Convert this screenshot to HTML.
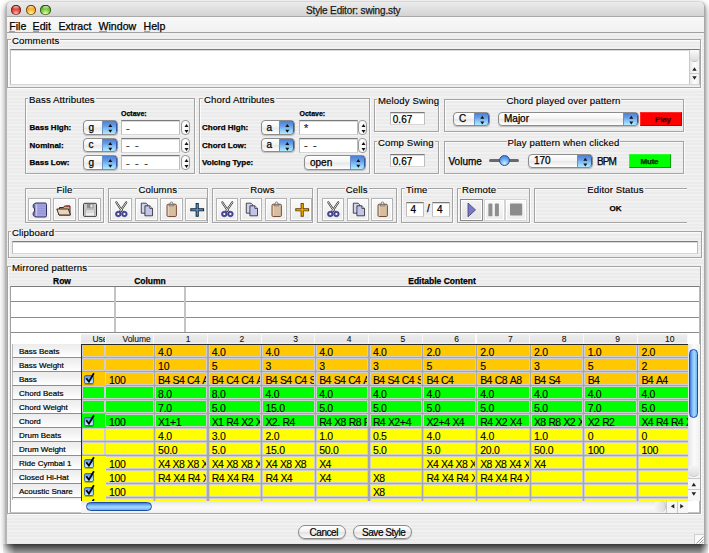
<!DOCTYPE html>
<html><head><meta charset="utf-8"><style>
*{box-sizing:border-box;margin:0;padding:0}
html,body{width:709px;height:553px;overflow:hidden;background:#fff;font-family:"Liberation Sans",sans-serif;color:#000}
.a{position:absolute}
#shadow{position:absolute;left:3px;top:544px;width:705px;height:9px;
  background:linear-gradient(to bottom,rgba(0,0,0,.62) 0,rgba(0,0,0,.5) 4px,rgba(0,0,0,.38) 9px);
  -webkit-mask-image:linear-gradient(to right,rgba(0,0,0,.15),#000 12px,#000 calc(100% - 8px),rgba(0,0,0,.2))}
#win{position:absolute;left:6px;top:2px;width:699px;height:542px;border-radius:5px 5px 0 0;overflow:hidden;
  background:repeating-linear-gradient(to bottom,#ebebeb 0,#ebebeb 1.75px,#f1f1f1 1.75px,#f1f1f1 3.5px) fixed;border-left:1px solid #b4b4b4;border-right:1px solid #a8a8a8;
  box-shadow:0 3px 6px 1px rgba(0,0,0,.42),0 0 2px rgba(0,0,0,.25)}
#title{position:absolute;left:0;top:0;width:698px;height:15px;background:linear-gradient(to bottom,#ececec,#d3d3d3);border-bottom:1px solid #a9a9a9}
#menu{position:absolute;left:0;top:15px;width:698px;height:16px;background:linear-gradient(to bottom,#f8f8f8,#f1f1f1);border-bottom:1px solid #a0a0a0}
.t{position:absolute;white-space:nowrap;line-height:1}
body{-webkit-text-stroke:0.25px currentColor}
.grp{position:absolute;border:1px solid #a4a4a4;box-shadow:inset 1px 1px 0 #fbfbfb,1px 1px 0 #fbfbfb}
.gt{position:absolute;font-size:9.6px;line-height:10px;white-space:nowrap;letter-spacing:0.12px;-webkit-text-stroke:0.12px #000}
.gt span{background:repeating-linear-gradient(to bottom,#ebebeb 0,#ebebeb 1.75px,#f1f1f1 1.75px,#f1f1f1 3.5px) fixed;padding:0 1px}
.tf{position:absolute;background:#fff;border:1px solid #bdbdbd;border-top:1px solid #7a7a7a;border-bottom-color:#d6d6d6;box-shadow:inset 0 1px 0 #dcdcdc}
.light{position:absolute;border-radius:50%}
.cb{position:absolute;border-radius:4px;border:1px solid #8c8c8c;background:linear-gradient(to bottom,#ffffff 0%,#f4f4f4 45%,#e8e8e8 55%,#ffffff 100%);box-shadow:0 1px 1px rgba(0,0,0,.2);overflow:hidden}
.cbt{position:absolute;line-height:1;white-space:nowrap}
.cbb{position:absolute;right:0;top:-1px;width:15px;bottom:-1px;border-radius:0 4px 4px 0;background:linear-gradient(to bottom,#4a80d6 0%,#6a9ee6 40%,#7cb8f2 55%,#b0ecff 100%);border:1px solid #3458a8;border-left:1px solid #6a90c8;border-bottom-color:#6a9ad0}
.cbb svg{position:absolute;left:0;top:0}
.sp{position:absolute;border-radius:4px;border:1px solid #9a9a9a;background:linear-gradient(to right,#f4f4f4,#fff 40%,#f0f0f0)}
.ib{position:absolute;border:1px solid #b4b4b4;background:linear-gradient(to bottom,#fafafa,#ececec);box-shadow:inset 0 0 0 1px #fff}
.ib.lt{border-color:#d4d4d4}
.ib.pr{border-color:#8a8a8a;background:linear-gradient(to bottom,#f2f2f2,#e4e4e4)}
.ib svg{position:absolute;left:0;top:0}

.mh{position:absolute;font-size:8.5px;font-weight:bold;line-height:8px;white-space:nowrap;text-align:center}
.rh{position:absolute;left:11.5px;width:69.5px;height:14px;border-left:1px solid #b8b8b8;border-bottom:1px solid #8e8e8e;
 background:linear-gradient(to bottom,#ececec 0,#f2f2f2 40%,#fbfbfb 80%,#ffffff 100%)}
.rh span{position:absolute;left:6.5px;top:3.3px;font-size:8px;line-height:8px;white-space:nowrap;color:#000;-webkit-text-stroke:0.2px #000;letter-spacing:0px}
.hd{position:absolute;top:333px;height:11px;background:linear-gradient(to bottom,#ffffff 0,#ececec 20%,#e4e4e4 80%,#f6f6f6 100%);border-right:1px solid #fafafa;overflow:hidden}
.hd span{position:absolute;top:1.8px;font-size:8.5px;line-height:8px;white-space:nowrap;color:#111;-webkit-text-stroke:0.1px #111}
.ce{position:absolute;overflow:hidden;font-size:10.5px;line-height:10px;white-space:nowrap;-webkit-text-stroke:0.1px #000;letter-spacing:-0.3px;word-spacing:0px}
.ce.g{box-shadow:0 0 0 0.7px #e2e2e4}
.ce span{position:absolute;left:2.3px;top:1.5px}
.ce i{font-style:normal;letter-spacing:-0.7px}
.chk{position:absolute;width:10px;height:9px;border-radius:2px;border:1px solid #4a6aa0;background:linear-gradient(to bottom,#5a8ee6 0,#94c4f8 50%,#c8f2ff 100%);box-shadow:0 1px 1px rgba(0,0,0,.3)}

.pb{position:absolute;border-radius:8px;border:1px solid #8a8a8a;background:linear-gradient(to bottom,#ffffff 0%,#f0f0f0 50%,#e2e2e2 51%,#fafafa 100%);box-shadow:0 1px 1px rgba(0,0,0,.25)}
.pb span{position:absolute;top:2px;font-size:10px;line-height:10px;white-space:nowrap;letter-spacing:-0.45px;-webkit-text-stroke:0.2px #000}
</style></head><body>
<div id="shadow"></div>
<div id="win"><div id="title"></div><div id="menu"></div></div>
<div class="light" style="left:10.7px;top:4.6px;width:10.6px;height:10.6px;background:radial-gradient(circle at 50% 85%,#ffb8b0 0,#e85a50 35%,#c02a20 70%,#801410 100%);box-shadow:inset 0 0 0 0.8px rgba(50,20,20,.7)"></div>
<div class="light" style="left:13px;top:5.6px;width:6px;height:3.2px;background:linear-gradient(to bottom,rgba(255,255,255,.75),rgba(255,255,255,.1))"></div>
<div class="light" style="left:25.7px;top:4.6px;width:10.6px;height:10.6px;background:radial-gradient(circle at 50% 85%,#fff8a0 0,#f8c040 35%,#e08a10 70%,#8a5000 100%);box-shadow:inset 0 0 0 0.8px rgba(50,20,20,.7)"></div>
<div class="light" style="left:28px;top:5.6px;width:6px;height:3.2px;background:linear-gradient(to bottom,rgba(255,255,255,.75),rgba(255,255,255,.1))"></div>
<div class="light" style="left:40.2px;top:4.6px;width:10.6px;height:10.6px;background:radial-gradient(circle at 50% 85%,#e0ffb0 0,#8ad850 35%,#48a820 70%,#1e5a08 100%);box-shadow:inset 0 0 0 0.8px rgba(50,20,20,.7)"></div>
<div class="light" style="left:42.5px;top:5.6px;width:6px;height:3.2px;background:linear-gradient(to bottom,rgba(255,255,255,.75),rgba(255,255,255,.1))"></div>
<div class="t" style="left:306px;top:5.5px;font-size:10px;color:#1a1a1a;letter-spacing:-0.15px">Style Editor: swing.sty</div>
<div class="t" style="left:9.3px;top:21.3px;font-size:10.6px;color:#000;">File</div>
<div class="a" style="left:9px;top:31px;width:6px;height:1px;background:#a0a0a0"></div>
<div class="t" style="left:32.6px;top:21.3px;font-size:10.6px;color:#000;">Edit</div>
<div class="a" style="left:33px;top:31px;width:6px;height:1px;background:#a0a0a0"></div>
<div class="t" style="left:58.5px;top:21.3px;font-size:10.6px;color:#000;">Extract</div>
<div class="t" style="left:98.5px;top:21.3px;font-size:10.6px;color:#000;">Window</div>
<div class="a" style="left:99px;top:31px;width:8px;height:1px;background:#a0a0a0"></div>
<div class="t" style="left:143.5px;top:21.3px;font-size:10.6px;color:#000;">Help</div>
<div class="a" style="left:144px;top:31px;width:6px;height:1px;background:#a0a0a0"></div>
<div class="grp" style="left:7px;top:39px;width:694px;height:49px;"></div>
<div class="gt" style="left:11px;top:36.4px"><span>Comments</span></div>
<div class="tf" style="left:9.5px;top:48.5px;width:690px;height:36.5px"></div>
<div class="a" style="left:688.5px;top:49.5px;width:10.5px;height:34.5px;border-left:1px solid #c8c8c8;background:linear-gradient(to right,#e8e8e8,#fdfdfd 50%,#f0f0f0)"></div>
<div class="a" style="left:689.5px;top:50px;width:9.5px;height:12px;border-radius:0 0 5px 5px;background:linear-gradient(to bottom,#fafafa,#dcdcdc);border-bottom:1px solid #c0c0c0"></div>
<div class="a" style="left:689px;top:72.5px;width:10px;height:1px;background:#c8c8c8"></div>
<svg class="a" style="left:688.5px;top:62px" width="11" height="22"><path d="M3.3 8.7L5.5 5.2L7.7 8.7Z M3.3 14.3L5.5 17.8L7.7 14.3Z" fill="#222"/></svg>
<div class="grp" style="left:25px;top:98px;width:170px;height:76px;"></div>
<div class="gt" style="left:28px;top:95.4px"><span>Bass Attributes</span></div>
<div class="t" style="left:121px;top:110px;font-size:7px;font-weight:bold;color:#000;">Octave:</div>
<div class="t" style="left:29.5px;top:124px;font-size:8px;font-weight:bold;color:#000;">Bass High:</div>
<div class="cb" style="left:82.5px;top:120px;width:35.0px;height:14.5px"><div class="cbt" style="left:5px;top:1.75px;font-size:10px">g</div><div class="cbb"><svg width="15" height="14.5" viewBox="0 0 15 14.5"><path d="M5.3 6.05L7.3 3.05L9.3 6.05Z M5.3 8.65L7.3 11.65L9.3 8.65Z" fill="#111"/></svg></div></div>
<div class="tf" style="left:121px;top:120px;width:59px;height:15px"><div class="t" style="left:4px;top:1.5px;font-size:10px"><span style="word-spacing:2.4px;color:#444;font-size:11px">-</span></div></div>
<div class="sp" style="left:181px;top:120px;width:9px;height:15px"><svg class="a" style="left:0;top:0" width="9" height="15"><path d="M2.5 6.0L4.5 3.0L6.5 6.0Z M2.5 9.0L4.5 12.0L6.5 9.0Z" fill="#111"/></svg></div>
<div class="t" style="left:29.5px;top:141.5px;font-size:8px;font-weight:bold;color:#000;">Nominal:</div>
<div class="cb" style="left:82.5px;top:137.5px;width:35.0px;height:14.5px"><div class="cbt" style="left:5px;top:1.75px;font-size:10px">c</div><div class="cbb"><svg width="15" height="14.5" viewBox="0 0 15 14.5"><path d="M5.3 6.05L7.3 3.05L9.3 6.05Z M5.3 8.65L7.3 11.65L9.3 8.65Z" fill="#111"/></svg></div></div>
<div class="tf" style="left:121px;top:137.5px;width:59px;height:15.0px"><div class="t" style="left:4px;top:1.5px;font-size:10px"><span style="word-spacing:2.4px;color:#444;font-size:11px">- -</span></div></div>
<div class="sp" style="left:181px;top:137.5px;width:9px;height:15.0px"><svg class="a" style="left:0;top:0" width="9" height="15.0"><path d="M2.5 6.0L4.5 3.0L6.5 6.0Z M2.5 9.0L4.5 12.0L6.5 9.0Z" fill="#111"/></svg></div>
<div class="t" style="left:29.5px;top:159px;font-size:8px;font-weight:bold;color:#000;">Bass Low:</div>
<div class="cb" style="left:82.5px;top:155px;width:35.0px;height:14.5px"><div class="cbt" style="left:5px;top:1.75px;font-size:10px">g</div><div class="cbb"><svg width="15" height="14.5" viewBox="0 0 15 14.5"><path d="M5.3 6.05L7.3 3.05L9.3 6.05Z M5.3 8.65L7.3 11.65L9.3 8.65Z" fill="#111"/></svg></div></div>
<div class="tf" style="left:121px;top:155px;width:59px;height:15px"><div class="t" style="left:4px;top:1.5px;font-size:10px"><span style="word-spacing:2.4px;color:#444;font-size:11px">- - -</span></div></div>
<div class="sp" style="left:181px;top:155px;width:9px;height:15px"><svg class="a" style="left:0;top:0" width="9" height="15"><path d="M2.5 6.0L4.5 3.0L6.5 6.0Z M2.5 9.0L4.5 12.0L6.5 9.0Z" fill="#111"/></svg></div>
<div class="grp" style="left:199px;top:98px;width:170.5px;height:76px;"></div>
<div class="gt" style="left:203px;top:95.4px"><span>Chord Attributes</span></div>
<div class="t" style="left:299.5px;top:110px;font-size:7px;font-weight:bold;color:#000;">Octave:</div>
<div class="t" style="left:202px;top:124px;font-size:8px;font-weight:bold;color:#000;">Chord High:</div>
<div class="cb" style="left:260.5px;top:120px;width:34.5px;height:14.5px"><div class="cbt" style="left:5px;top:1.75px;font-size:10px">a</div><div class="cbb"><svg width="15" height="14.5" viewBox="0 0 15 14.5"><path d="M5.3 6.05L7.3 3.05L9.3 6.05Z M5.3 8.65L7.3 11.65L9.3 8.65Z" fill="#111"/></svg></div></div>
<div class="tf" style="left:299px;top:120px;width:58.5px;height:15px"><div class="t" style="left:4px;top:1.5px;font-size:10px"><span style="word-spacing:2.4px;color:#333;font-size:11px">*</span></div></div>
<div class="sp" style="left:358px;top:120px;width:9px;height:15px"><svg class="a" style="left:0;top:0" width="9" height="15"><path d="M2.5 6.0L4.5 3.0L6.5 6.0Z M2.5 9.0L4.5 12.0L6.5 9.0Z" fill="#111"/></svg></div>
<div class="t" style="left:202px;top:141.5px;font-size:8px;font-weight:bold;color:#000;">Chord Low:</div>
<div class="cb" style="left:260.5px;top:137.5px;width:34.5px;height:14.5px"><div class="cbt" style="left:5px;top:1.75px;font-size:10px">a</div><div class="cbb"><svg width="15" height="14.5" viewBox="0 0 15 14.5"><path d="M5.3 6.05L7.3 3.05L9.3 6.05Z M5.3 8.65L7.3 11.65L9.3 8.65Z" fill="#111"/></svg></div></div>
<div class="tf" style="left:299px;top:137.5px;width:58.5px;height:15.0px"><div class="t" style="left:4px;top:1.5px;font-size:10px"><span style="word-spacing:2.4px;color:#333;font-size:11px">- -</span></div></div>
<div class="sp" style="left:358px;top:137.5px;width:9px;height:15.0px"><svg class="a" style="left:0;top:0" width="9" height="15.0"><path d="M2.5 6.0L4.5 3.0L6.5 6.0Z M2.5 9.0L4.5 12.0L6.5 9.0Z" fill="#111"/></svg></div>
<div class="t" style="left:202px;top:159px;font-size:8px;font-weight:bold;color:#000;">Voicing Type:</div>
<div class="cb" style="left:304px;top:155px;width:62px;height:14.5px"><div class="cbt" style="left:5px;top:1.75px;font-size:10px">open</div><div class="cbb"><svg width="15" height="14.5" viewBox="0 0 15 14.5"><path d="M5.3 6.05L7.3 3.05L9.3 6.05Z M5.3 8.65L7.3 11.65L9.3 8.65Z" fill="#111"/></svg></div></div>
<div class="grp" style="left:374px;top:99px;width:65px;height:32.5px;"></div>
<div class="gt" style="left:377px;top:96.4px"><span>Melody Swing</span></div>
<div class="tf" style="left:390px;top:112px;width:35px;height:13px"><div class="t" style="left:1.8px;top:1.5px;font-size:10px">0.67</div></div>
<div class="grp" style="left:374px;top:141px;width:65px;height:33px;"></div>
<div class="gt" style="left:377px;top:138.4px"><span>Comp Swing</span></div>
<div class="tf" style="left:390px;top:154px;width:35px;height:13px"><div class="t" style="left:1.8px;top:1.5px;font-size:10px">0.67</div></div>
<div class="grp" style="left:443.5px;top:99px;width:240.0px;height:33px;"></div>
<div class="gt" style="left:443.5px;width:240.0px;top:96.4px;text-align:center"><span>Chord played over pattern</span></div>
<div class="cb" style="left:453px;top:111.5px;width:36.5px;height:14.0px"><div class="cbt" style="left:5px;top:1.5px;font-size:10px">C</div><div class="cbb"><svg width="15" height="14.0" viewBox="0 0 15 14.0"><path d="M5.3 5.8L7.3 2.8L9.3 5.8Z M5.3 8.4L7.3 11.4L9.3 8.4Z" fill="#111"/></svg></div></div>
<div class="cb" style="left:498px;top:111.5px;width:141px;height:14.0px"><div class="cbt" style="left:5px;top:1.5px;font-size:10px">Major</div><div class="cbb"><svg width="15" height="14.0" viewBox="0 0 15 14.0"><path d="M5.3 5.8L7.3 2.8L9.3 5.8Z M5.3 8.4L7.3 11.4L9.3 8.4Z" fill="#111"/></svg></div></div>
<div class="a" style="left:640px;top:112px;width:42px;height:14px;background:#ff0000;border:1px solid #c00000;border-top-color:#ff2a2a;border-left-color:#ff2a2a"></div>
<div class="t" style="left:655px;top:115.5px;font-size:8px;font-weight:bold;color:#4a0000;letter-spacing:-0.2px">Play</div>
<div class="grp" style="left:443.5px;top:141px;width:240.0px;height:33px;"></div>
<div class="gt" style="left:443.5px;width:240.0px;top:138.4px;text-align:center"><span>Play pattern when clicked</span></div>
<div class="t" style="left:448.5px;top:157px;font-size:10px;color:#000;">Volume</div>
<div class="a" style="left:489px;top:159px;width:30px;height:3px;border-radius:2px;background:#6a6a6a"></div>
<div class="a" style="left:499px;top:155px;width:11px;height:11px;border-radius:50%;border:1px solid #2a4a9a;background:radial-gradient(circle at 50% 80%,#c8f4ff 0,#6aaaf0 50%,#3a70d0 100%)"></div>
<div class="cb" style="left:527.5px;top:153.5px;width:65.5px;height:14.0px"><div class="cbt" style="left:5.5px;top:1.5px;font-size:10px">170</div><div class="cbb"><svg width="15" height="14.0" viewBox="0 0 15 14.0"><path d="M5.3 5.8L7.3 2.8L9.3 5.8Z M5.3 8.4L7.3 11.4L9.3 8.4Z" fill="#111"/></svg></div></div>
<div class="t" style="left:597px;top:157px;font-size:10px;color:#000;letter-spacing:-0.9px">BPM</div>
<div class="a" style="left:628.5px;top:154px;width:42px;height:14px;background:#00ff00;border:1px solid #00a000;border-top-color:#2aff2a;border-left-color:#2aff2a"></div>
<div class="t" style="left:640.5px;top:157.5px;font-size:8px;font-weight:bold;color:#002a00;letter-spacing:-0.2px">Mute</div>
<div class="grp" style="left:25px;top:188px;width:79px;height:34.5px;"></div>
<div class="gt" style="left:25px;width:79px;top:185.4px;text-align:center"><span>File</span></div>
<div class="ib" style="left:28px;top:198px;width:22.5px;height:22.5px"><svg width="22" height="22" viewBox="0 0 22 22">
<rect x="5.5" y="4" width="12" height="14" rx="1.5" fill="#a2a2e0" stroke="#2e2e5a" stroke-width="1"/>
<path d="M7.5 5.5V16.5" stroke="#c8c8f0" stroke-width="1"/>
<path d="M9 7h7M9 9.5h7M9 12h7M9 14.5h7" stroke="#8a8ad0" stroke-width="0.6"/>
<path d="M5.5 4.6C3.6 4.6 3.6 9.6 5.5 9.6" fill="#a2a2e0" stroke="#2e2e5a" stroke-width="1"/>
<path d="M5.5 12.4C3.6 12.4 3.6 17.4 5.5 17.4" fill="#a2a2e0" stroke="#2e2e5a" stroke-width="1"/>
</svg></div>
<div class="ib" style="left:53px;top:198px;width:22.5px;height:22.5px"><svg width="22" height="22" viewBox="0 0 22 22">
<path d="M5.5 8.5h4l1-1.5h5.5v9h-11z" fill="#c8aa88" stroke="#3a2a1a" stroke-width="1"/>
<path d="M12 7h4" stroke="#c03030" stroke-width="1.2"/>
<path d="M2.8 10h11.5l2.2 6h-11.5z" fill="#ead6bc" stroke="#3a2a1a" stroke-width="1" stroke-linejoin="round"/>
</svg></div>
<div class="ib" style="left:78px;top:198px;width:22.5px;height:22.5px"><svg width="22" height="22" viewBox="0 0 22 22">
<rect x="4.5" y="4.3" width="13" height="13.2" rx="1.2" fill="#c6c6c6" stroke="#3a3a3a" stroke-width="1"/>
<rect x="8" y="4.8" width="6.5" height="4.5" fill="#8e8e8e"/>
<rect x="11.5" y="5.5" width="2" height="3" fill="#e8e8e8"/>
<rect x="6.5" y="11" width="9" height="6" fill="#ececec" stroke="#9a9a9a" stroke-width="0.5"/>
<path d="M7 13h8" stroke="#b0b0b0" stroke-width="0.6"/>
</svg></div>
<div class="grp" style="left:107.5px;top:188px;width:100.5px;height:34.5px;"></div>
<div class="gt" style="left:107.5px;width:100.5px;top:185.4px;text-align:center"><span>Columns</span></div>
<div class="ib" style="left:110px;top:198px;width:22px;height:22.5px"><svg width="22" height="22" viewBox="0 0 22 22">
<path d="M5.3 3.4L11.6 12.6M15.3 3.4L9 12.6" stroke="#2a2a2a" stroke-width="2" stroke-linecap="round"/>
<path d="M5.3 3.4L11.6 12.6M15.3 3.4L9 12.6" stroke="#f0f0f0" stroke-width="0.9" stroke-linecap="round"/>
<circle cx="7.3" cy="15" r="2.8" fill="#4c4ca0" stroke="#2a2a66" stroke-width="0.6"/>
<circle cx="13.4" cy="15" r="2.8" fill="#4c4ca0" stroke="#2a2a66" stroke-width="0.6"/>
<circle cx="7.3" cy="15" r="1.1" fill="#fff"/>
<circle cx="13.4" cy="15" r="1.1" fill="#fff"/>
</svg></div>
<div class="ib" style="left:135px;top:198px;width:22.5px;height:22.5px"><svg width="22" height="22" viewBox="0 0 22 22">
<path d="M5.3 4.2h4.8l1.6 1.6v8.4h-6.4z" fill="#d2d2f2" stroke="#222" stroke-width="0.8"/>
<path d="M8.9 6.8h5l2.6 2.6v7.4h-7.6z" fill="#c4c4ea" stroke="#222" stroke-width="0.8"/>
<path d="M13.9 6.8v2.6h2.6" fill="#eeeeff" stroke="#222" stroke-width="0.8"/>
</svg></div>
<div class="ib" style="left:160px;top:198px;width:22.5px;height:22.5px"><svg width="22" height="22" viewBox="0 0 22 22">
<rect x="6" y="5.2" width="9.4" height="12.3" rx="1.2" fill="#d6bfa0" stroke="#7a4a3a" stroke-width="1"/>
<path d="M8.2 5.4h4.6v1.4h-4.6z" fill="#e8e8e8" stroke="#555" stroke-width="0.7"/>
<circle cx="10.5" cy="4.2" r="1.3" fill="#e0e0e0" stroke="#666" stroke-width="0.7"/>
<rect x="6.9" y="7.2" width="1" height="9.5" fill="#e8d8c0"/>
</svg></div>
<div class="ib" style="left:185px;top:198px;width:22px;height:22.5px"><svg width="22" height="22" viewBox="0 0 22 22">
<path d="M11.2 3.9V17.7M4.3 10.8H18.1" stroke="#0c1c30" stroke-width="3.1"/>
<path d="M11.2 4.8V16.8M5.2 10.8H17.2" stroke="#5a9acc" stroke-width="1.3"/>
</svg></div>
<div class="grp" style="left:212px;top:188px;width:101px;height:34.5px;"></div>
<div class="gt" style="left:212px;width:101px;top:185.4px;text-align:center"><span>Rows</span></div>
<div class="ib" style="left:215.5px;top:198px;width:22.5px;height:22.5px"><svg width="22" height="22" viewBox="0 0 22 22">
<path d="M5.3 3.4L11.6 12.6M15.3 3.4L9 12.6" stroke="#2a2a2a" stroke-width="2" stroke-linecap="round"/>
<path d="M5.3 3.4L11.6 12.6M15.3 3.4L9 12.6" stroke="#f0f0f0" stroke-width="0.9" stroke-linecap="round"/>
<circle cx="7.3" cy="15" r="2.8" fill="#4c4ca0" stroke="#2a2a66" stroke-width="0.6"/>
<circle cx="13.4" cy="15" r="2.8" fill="#4c4ca0" stroke="#2a2a66" stroke-width="0.6"/>
<circle cx="7.3" cy="15" r="1.1" fill="#fff"/>
<circle cx="13.4" cy="15" r="1.1" fill="#fff"/>
</svg></div>
<div class="ib" style="left:240px;top:198px;width:22px;height:22.5px"><svg width="22" height="22" viewBox="0 0 22 22">
<path d="M5.3 4.2h4.8l1.6 1.6v8.4h-6.4z" fill="#d2d2f2" stroke="#222" stroke-width="0.8"/>
<path d="M8.9 6.8h5l2.6 2.6v7.4h-7.6z" fill="#c4c4ea" stroke="#222" stroke-width="0.8"/>
<path d="M13.9 6.8v2.6h2.6" fill="#eeeeff" stroke="#222" stroke-width="0.8"/>
</svg></div>
<div class="ib" style="left:264.5px;top:198px;width:22.0px;height:22.5px"><svg width="22" height="22" viewBox="0 0 22 22">
<rect x="6" y="5.2" width="9.4" height="12.3" rx="1.2" fill="#d6bfa0" stroke="#7a4a3a" stroke-width="1"/>
<path d="M8.2 5.4h4.6v1.4h-4.6z" fill="#e8e8e8" stroke="#555" stroke-width="0.7"/>
<circle cx="10.5" cy="4.2" r="1.3" fill="#e0e0e0" stroke="#666" stroke-width="0.7"/>
<rect x="6.9" y="7.2" width="1" height="9.5" fill="#e8d8c0"/>
</svg></div>
<div class="ib" style="left:289.5px;top:198px;width:22.0px;height:22.5px"><svg width="22" height="22" viewBox="0 0 22 22">
<path d="M11.2 3.9V17.7M4.3 10.8H18.1" stroke="#5a3a00" stroke-width="3.1"/>
<path d="M11.2 4.8V16.8M5.2 10.8H17.2" stroke="#ffb000" stroke-width="1.3"/>
</svg></div>
<div class="grp" style="left:317px;top:188px;width:79.5px;height:34.5px;"></div>
<div class="gt" style="left:317px;width:79.5px;top:185.4px;text-align:center"><span>Cells</span></div>
<div class="ib" style="left:322px;top:198px;width:22px;height:22.5px"><svg width="22" height="22" viewBox="0 0 22 22">
<path d="M5.3 3.4L11.6 12.6M15.3 3.4L9 12.6" stroke="#2a2a2a" stroke-width="2" stroke-linecap="round"/>
<path d="M5.3 3.4L11.6 12.6M15.3 3.4L9 12.6" stroke="#f0f0f0" stroke-width="0.9" stroke-linecap="round"/>
<circle cx="7.3" cy="15" r="2.8" fill="#4c4ca0" stroke="#2a2a66" stroke-width="0.6"/>
<circle cx="13.4" cy="15" r="2.8" fill="#4c4ca0" stroke="#2a2a66" stroke-width="0.6"/>
<circle cx="7.3" cy="15" r="1.1" fill="#fff"/>
<circle cx="13.4" cy="15" r="1.1" fill="#fff"/>
</svg></div>
<div class="ib" style="left:346.5px;top:198px;width:22.0px;height:22.5px"><svg width="22" height="22" viewBox="0 0 22 22">
<path d="M5.3 4.2h4.8l1.6 1.6v8.4h-6.4z" fill="#d2d2f2" stroke="#222" stroke-width="0.8"/>
<path d="M8.9 6.8h5l2.6 2.6v7.4h-7.6z" fill="#c4c4ea" stroke="#222" stroke-width="0.8"/>
<path d="M13.9 6.8v2.6h2.6" fill="#eeeeff" stroke="#222" stroke-width="0.8"/>
</svg></div>
<div class="ib" style="left:371px;top:198px;width:22px;height:22.5px"><svg width="22" height="22" viewBox="0 0 22 22">
<rect x="6" y="5.2" width="9.4" height="12.3" rx="1.2" fill="#d6bfa0" stroke="#7a4a3a" stroke-width="1"/>
<path d="M8.2 5.4h4.6v1.4h-4.6z" fill="#e8e8e8" stroke="#555" stroke-width="0.7"/>
<circle cx="10.5" cy="4.2" r="1.3" fill="#e0e0e0" stroke="#666" stroke-width="0.7"/>
<rect x="6.9" y="7.2" width="1" height="9.5" fill="#e8d8c0"/>
</svg></div>
<div class="grp" style="left:401px;top:188px;width:51.5px;height:34.5px;"></div>
<div class="gt" style="left:405px;top:185.4px"><span>Time</span></div>
<div class="tf" style="left:405.5px;top:201.5px;width:18.0px;height:15.5px"><div class="t" style="left:4px;top:2.75px;font-size:10px">4</div></div>
<div class="t" style="left:427px;top:204px;font-size:10px;color:#000;">/</div>
<div class="tf" style="left:432px;top:201.5px;width:18px;height:15.5px"><div class="t" style="left:4px;top:2.75px;font-size:10px">4</div></div>
<div class="grp" style="left:457px;top:188px;width:72.5px;height:34.5px;"></div>
<div class="gt" style="left:461px;top:185.4px"><span>Remote</span></div>
<div class="ib pr" style="left:460px;top:198.5px;width:22.5px;height:22.0px"><svg width="22" height="22" viewBox="0 0 22 22">
<path d="M7 3L14.5 9.9L7 16.8Z" fill="#7a7ac2" stroke="#3e3e7a" stroke-width="0.8" stroke-linejoin="round"/>
</svg></div>
<div class="ib lt" style="left:483.5px;top:198.5px;width:21.5px;height:22.0px"><svg width="22" height="22" viewBox="0 0 22 22">
<rect x="3.4" y="3.6" width="4" height="12.6" rx="0.8" fill="#8e8e8e"/>
<rect x="9.9" y="3.6" width="4" height="12.6" rx="0.8" fill="#8e8e8e"/>
</svg></div>
<div class="ib lt" style="left:505px;top:198.5px;width:22px;height:22.0px"><svg width="22" height="22" viewBox="0 0 22 22">
<rect x="4" y="3.6" width="12.2" height="12" rx="0.8" fill="#8c8c8c"/>
</svg></div>
<div class="grp" style="left:533.5px;top:188px;width:153.0px;height:34.5px;border-right:none;box-shadow:inset 1px 1px 0 #fbfbfb,0 1px 0 #fbfbfb;"></div>
<div class="gt" style="left:533.5px;width:164px;top:185px;text-align:center"><span>Editor Status</span></div>
<div class="t" style="left:609.5px;top:205px;font-size:8px;font-weight:bold;color:#000;">OK</div>
<div class="grp" style="left:8px;top:231px;width:693.5px;height:26.5px;"></div>
<div class="gt" style="left:11px;top:228.4px"><span>Clipboard</span></div>
<div class="tf" style="left:12px;top:241px;width:686px;height:12.5px"></div>
<div class="grp" style="left:7px;top:266.4px;width:694px;height:248.10000000000002px;"></div>
<div class="gt" style="left:11px;top:263.2px"><span>Mirrored patterns</span></div>
<div class="mh" style="left:10px;width:104px;top:277px">Row</div>
<div class="mh" style="left:115px;width:70px;top:277px">Column</div>
<div class="mh" style="left:185px;width:514px;top:277px">Editable Content</div>
<div class="a" style="left:10px;top:286px;width:690px;height:227px;background:#fff;border:1px solid #a0a0a0;border-top-color:#7a7a7a;border-bottom-color:#c4c4c4;border-right-color:#b8b8b8"></div>
<div class="a" style="left:11px;top:301px;width:688px;height:1.2px;background:#8c8c8c"></div>
<div class="a" style="left:11px;top:316.5px;width:688px;height:1.2px;background:#8c8c8c"></div>
<div class="a" style="left:11px;top:331.5px;width:688px;height:1.2px;background:#8c8c8c"></div>
<div class="a" style="left:114px;top:287px;width:1.8px;height:45px;background:#c4c4c4"></div>
<div class="a" style="left:184px;top:287px;width:1.8px;height:45px;background:#c4c4c4"></div>
<div class="hd" style="left:81px;width:24.5px"><span style="right:-3px">Use</span></div>
<div class="hd" style="left:105.5px;width:48.80000000000001px"><span style="right:2.5px">Volume</span></div>
<div class="hd" style="left:154.3px;width:53.69999999999999px"><span style="left:33.849999999999994px;transform:translateX(-50%)">1</span></div>
<div class="hd" style="left:208.0px;width:53.700000000000045px"><span style="left:33.85000000000002px;transform:translateX(-50%)">2</span></div>
<div class="hd" style="left:261.70000000000005px;width:53.69999999999999px"><span style="left:33.849999999999994px;transform:translateX(-50%)">3</span></div>
<div class="hd" style="left:315.40000000000003px;width:53.69999999999999px"><span style="left:33.849999999999994px;transform:translateX(-50%)">4</span></div>
<div class="hd" style="left:369.1px;width:53.69999999999999px"><span style="left:33.849999999999994px;transform:translateX(-50%)">5</span></div>
<div class="hd" style="left:422.8px;width:53.700000000000045px"><span style="left:33.85000000000002px;transform:translateX(-50%)">6</span></div>
<div class="hd" style="left:476.50000000000006px;width:53.69999999999999px"><span style="left:33.849999999999994px;transform:translateX(-50%)">7</span></div>
<div class="hd" style="left:530.2px;width:53.700000000000045px"><span style="left:33.85000000000002px;transform:translateX(-50%)">8</span></div>
<div class="hd" style="left:583.9000000000001px;width:53.69999999999993px"><span style="left:33.849999999999966px;transform:translateX(-50%)">9</span></div>
<div class="hd" style="left:637.6px;width:50.39999999999998px"><span style="left:32.19999999999999px;transform:translateX(-50%)">10</span></div>
<div class="a" style="left:81px;top:344px;width:607px;height:156.5px;background:#a6a6ac;overflow:hidden" id="body">
<div class="ce g" style="left:1.5px;top:1.3px;width:21px;height:10.5px;background:#ffc800"></div>
<div class="ce g" style="left:25px;top:1.3px;width:46.5px;height:10.5px;background:#ffc800"></div>
<div class="ce g" style="left:74.80000000000001px;top:1.3px;width:50.5px;height:10.5px;background:#ffc800"><span>4.0</span></div>
<div class="ce g" style="left:128.5px;top:1.3px;width:50.5px;height:10.5px;background:#ffc800"><span>4.0</span></div>
<div class="ce g" style="left:182.20000000000005px;top:1.3px;width:50.5px;height:10.5px;background:#ffc800"><span>4.0</span></div>
<div class="ce g" style="left:235.90000000000003px;top:1.3px;width:50.5px;height:10.5px;background:#ffc800"><span>4.0</span></div>
<div class="ce g" style="left:289.6px;top:1.3px;width:50.5px;height:10.5px;background:#ffc800"><span>4.0</span></div>
<div class="ce g" style="left:343.3px;top:1.3px;width:50.5px;height:10.5px;background:#ffc800"><span>2.0</span></div>
<div class="ce g" style="left:397.00000000000006px;top:1.3px;width:50.5px;height:10.5px;background:#ffc800"><span>2.0</span></div>
<div class="ce g" style="left:450.70000000000005px;top:1.3px;width:50.5px;height:10.5px;background:#ffc800"><span>2.0</span></div>
<div class="ce g" style="left:504.4000000000001px;top:1.3px;width:50.5px;height:10.5px;background:#ffc800"><span>1.0</span></div>
<div class="ce g" style="left:558.1px;top:1.3px;width:50.5px;height:10.5px;background:#ffc800"><span>2.0</span></div>
<div class="rh" style="left:-69.5px;top:0px"><span>Bass Beats</span></div>
<div class="ce g" style="left:1.5px;top:15.3px;width:21px;height:10.5px;background:#ffc800"></div>
<div class="ce g" style="left:25px;top:15.3px;width:46.5px;height:10.5px;background:#ffc800"></div>
<div class="ce g" style="left:74.80000000000001px;top:15.3px;width:50.5px;height:10.5px;background:#ffc800"><span>10</span></div>
<div class="ce g" style="left:128.5px;top:15.3px;width:50.5px;height:10.5px;background:#ffc800"><span>5</span></div>
<div class="ce g" style="left:182.20000000000005px;top:15.3px;width:50.5px;height:10.5px;background:#ffc800"><span>3</span></div>
<div class="ce g" style="left:235.90000000000003px;top:15.3px;width:50.5px;height:10.5px;background:#ffc800"><span>3</span></div>
<div class="ce g" style="left:289.6px;top:15.3px;width:50.5px;height:10.5px;background:#ffc800"><span>3</span></div>
<div class="ce g" style="left:343.3px;top:15.3px;width:50.5px;height:10.5px;background:#ffc800"><span>5</span></div>
<div class="ce g" style="left:397.00000000000006px;top:15.3px;width:50.5px;height:10.5px;background:#ffc800"><span>5</span></div>
<div class="ce g" style="left:450.70000000000005px;top:15.3px;width:50.5px;height:10.5px;background:#ffc800"><span>3</span></div>
<div class="ce g" style="left:504.4000000000001px;top:15.3px;width:50.5px;height:10.5px;background:#ffc800"><span>5</span></div>
<div class="ce g" style="left:558.1px;top:15.3px;width:50.5px;height:10.5px;background:#ffc800"><span>2</span></div>
<div class="rh" style="left:-69.5px;top:14px"><span>Bass Weight</span></div>
<div class="ce" style="left:1px;top:28px;width:23.5px;height:14px;background:#ffc800"><div class="chk" style="left:2px;top:3px"></div><svg class="a" style="left:3px;top:0px" width="12" height="12"><path d="M1.3 6.2L3.9 9.6L8.9 1.2" stroke="#000" stroke-width="1.8" fill="none" stroke-linejoin="miter"/></svg></div>
<div class="ce g" style="left:25px;top:29.3px;width:46.5px;height:10.5px;background:#ffc800"><span style="left:3px">100</span></div>
<div class="ce g" style="left:74.80000000000001px;top:29.3px;width:50.5px;height:10.5px;background:#ffc800"><span><i>B</i>4 <i>S</i>4 <i>C</i>4 <i>A</i>4</span></div>
<div class="ce g" style="left:128.5px;top:29.3px;width:50.5px;height:10.5px;background:#ffc800"><span><i>B</i>4 <i>C</i>4 <i>C</i>4 <i>A</i>4</span></div>
<div class="ce g" style="left:182.20000000000005px;top:29.3px;width:50.5px;height:10.5px;background:#ffc800"><span><i>B</i>4 <i>S</i>4 <i>C</i>4 <i>S</i>4</span></div>
<div class="ce g" style="left:235.90000000000003px;top:29.3px;width:50.5px;height:10.5px;background:#ffc800"><span><i>B</i>4 <i>S</i>4 <i>C</i>4 <i>A</i>4</span></div>
<div class="ce g" style="left:289.6px;top:29.3px;width:50.5px;height:10.5px;background:#ffc800"><span><i>B</i>4 <i>S</i>4 <i>C</i>4 <i>S</i>4</span></div>
<div class="ce g" style="left:343.3px;top:29.3px;width:50.5px;height:10.5px;background:#ffc800"><span><i>B</i>4 <i>C</i>4</span></div>
<div class="ce g" style="left:397.00000000000006px;top:29.3px;width:50.5px;height:10.5px;background:#ffc800"><span><i>B</i>4 <i>C</i>8 <i>A</i>8</span></div>
<div class="ce g" style="left:450.70000000000005px;top:29.3px;width:50.5px;height:10.5px;background:#ffc800"><span><i>B</i>4 <i>S</i>4</span></div>
<div class="ce g" style="left:504.4000000000001px;top:29.3px;width:50.5px;height:10.5px;background:#ffc800"><span><i>B</i>4</span></div>
<div class="ce g" style="left:558.1px;top:29.3px;width:50.5px;height:10.5px;background:#ffc800"><span><i>B</i>4 <i>A</i>4</span></div>
<div class="rh" style="left:-69.5px;top:28px"><span>Bass</span></div>
<div class="ce g" style="left:1.5px;top:43.3px;width:21px;height:10.5px;background:#00ff00"></div>
<div class="ce g" style="left:25px;top:43.3px;width:46.5px;height:10.5px;background:#00ff00"></div>
<div class="ce g" style="left:74.80000000000001px;top:43.3px;width:50.5px;height:10.5px;background:#00ff00"><span>8.0</span></div>
<div class="ce g" style="left:128.5px;top:43.3px;width:50.5px;height:10.5px;background:#00ff00"><span>8.0</span></div>
<div class="ce g" style="left:182.20000000000005px;top:43.3px;width:50.5px;height:10.5px;background:#00ff00"><span>4.0</span></div>
<div class="ce g" style="left:235.90000000000003px;top:43.3px;width:50.5px;height:10.5px;background:#00ff00"><span>4.0</span></div>
<div class="ce g" style="left:289.6px;top:43.3px;width:50.5px;height:10.5px;background:#00ff00"><span>4.0</span></div>
<div class="ce g" style="left:343.3px;top:43.3px;width:50.5px;height:10.5px;background:#00ff00"><span>4.0</span></div>
<div class="ce g" style="left:397.00000000000006px;top:43.3px;width:50.5px;height:10.5px;background:#00ff00"><span>4.0</span></div>
<div class="ce g" style="left:450.70000000000005px;top:43.3px;width:50.5px;height:10.5px;background:#00ff00"><span>4.0</span></div>
<div class="ce g" style="left:504.4000000000001px;top:43.3px;width:50.5px;height:10.5px;background:#00ff00"><span>4.0</span></div>
<div class="ce g" style="left:558.1px;top:43.3px;width:50.5px;height:10.5px;background:#00ff00"><span>4.0</span></div>
<div class="rh" style="left:-69.5px;top:42px"><span>Chord Beats</span></div>
<div class="ce g" style="left:1.5px;top:57.3px;width:21px;height:10.5px;background:#00ff00"></div>
<div class="ce g" style="left:25px;top:57.3px;width:46.5px;height:10.5px;background:#00ff00"></div>
<div class="ce g" style="left:74.80000000000001px;top:57.3px;width:50.5px;height:10.5px;background:#00ff00"><span>7.0</span></div>
<div class="ce g" style="left:128.5px;top:57.3px;width:50.5px;height:10.5px;background:#00ff00"><span>5.0</span></div>
<div class="ce g" style="left:182.20000000000005px;top:57.3px;width:50.5px;height:10.5px;background:#00ff00"><span>15.0</span></div>
<div class="ce g" style="left:235.90000000000003px;top:57.3px;width:50.5px;height:10.5px;background:#00ff00"><span>5.0</span></div>
<div class="ce g" style="left:289.6px;top:57.3px;width:50.5px;height:10.5px;background:#00ff00"><span>5.0</span></div>
<div class="ce g" style="left:343.3px;top:57.3px;width:50.5px;height:10.5px;background:#00ff00"><span>5.0</span></div>
<div class="ce g" style="left:397.00000000000006px;top:57.3px;width:50.5px;height:10.5px;background:#00ff00"><span>5.0</span></div>
<div class="ce g" style="left:450.70000000000005px;top:57.3px;width:50.5px;height:10.5px;background:#00ff00"><span>5.0</span></div>
<div class="ce g" style="left:504.4000000000001px;top:57.3px;width:50.5px;height:10.5px;background:#00ff00"><span>7.0</span></div>
<div class="ce g" style="left:558.1px;top:57.3px;width:50.5px;height:10.5px;background:#00ff00"><span>5.0</span></div>
<div class="rh" style="left:-69.5px;top:56px"><span>Chord Weight</span></div>
<div class="ce" style="left:1px;top:70px;width:23.5px;height:14px;background:#00ff00"><div class="chk" style="left:2px;top:3px"></div><svg class="a" style="left:3px;top:0px" width="12" height="12"><path d="M1.3 6.2L3.9 9.6L8.9 1.2" stroke="#000" stroke-width="1.8" fill="none" stroke-linejoin="miter"/></svg></div>
<div class="ce g" style="left:25px;top:71.3px;width:46.5px;height:10.5px;background:#00ff00"><span style="left:3px">100</span></div>
<div class="ce g" style="left:74.80000000000001px;top:71.3px;width:50.5px;height:10.5px;background:#00ff00"><span><i>X</i>1+1</span></div>
<div class="ce g" style="left:128.5px;top:71.3px;width:50.5px;height:10.5px;background:#00ff00"><span><i>X</i>1 <i>R</i>4 <i>X</i>2 <i>X</i>4</span></div>
<div class="ce g" style="left:182.20000000000005px;top:71.3px;width:50.5px;height:10.5px;background:#00ff00"><span><i>X</i>2. <i>R</i>4</span></div>
<div class="ce g" style="left:235.90000000000003px;top:71.3px;width:50.5px;height:10.5px;background:#00ff00"><span><i>R</i>4 <i>X</i>8 <i>R</i>8 <i>R</i>4</span></div>
<div class="ce g" style="left:289.6px;top:71.3px;width:50.5px;height:10.5px;background:#00ff00"><span><i>R</i>4 <i>X</i>2+4</span></div>
<div class="ce g" style="left:343.3px;top:71.3px;width:50.5px;height:10.5px;background:#00ff00"><span><i>X</i>2+4 <i>X</i>4</span></div>
<div class="ce g" style="left:397.00000000000006px;top:71.3px;width:50.5px;height:10.5px;background:#00ff00"><span><i>R</i>4 <i>X</i>2 <i>X</i>4</span></div>
<div class="ce g" style="left:450.70000000000005px;top:71.3px;width:50.5px;height:10.5px;background:#00ff00"><span><i>X</i>8 <i>R</i>8 <i>X</i>2 <i>X</i>4</span></div>
<div class="ce g" style="left:504.4000000000001px;top:71.3px;width:50.5px;height:10.5px;background:#00ff00"><span><i>X</i>2 <i>R</i>2</span></div>
<div class="ce g" style="left:558.1px;top:71.3px;width:50.5px;height:10.5px;background:#00ff00"><span><i>X</i>4 <i>R</i>4 <i>R</i>4 <i>X</i>4</span></div>
<div class="rh" style="left:-69.5px;top:70px"><span>Chord</span></div>
<div class="ce g" style="left:1.5px;top:85.3px;width:21px;height:10.5px;background:#ffff00"></div>
<div class="ce g" style="left:25px;top:85.3px;width:46.5px;height:10.5px;background:#ffff00"></div>
<div class="ce g" style="left:74.80000000000001px;top:85.3px;width:50.5px;height:10.5px;background:#ffff00"><span>4.0</span></div>
<div class="ce g" style="left:128.5px;top:85.3px;width:50.5px;height:10.5px;background:#ffff00"><span>3.0</span></div>
<div class="ce g" style="left:182.20000000000005px;top:85.3px;width:50.5px;height:10.5px;background:#ffff00"><span>2.0</span></div>
<div class="ce g" style="left:235.90000000000003px;top:85.3px;width:50.5px;height:10.5px;background:#ffff00"><span>1.0</span></div>
<div class="ce g" style="left:289.6px;top:85.3px;width:50.5px;height:10.5px;background:#ffff00"><span>0.5</span></div>
<div class="ce g" style="left:343.3px;top:85.3px;width:50.5px;height:10.5px;background:#ffff00"><span>4.0</span></div>
<div class="ce g" style="left:397.00000000000006px;top:85.3px;width:50.5px;height:10.5px;background:#ffff00"><span>4.0</span></div>
<div class="ce g" style="left:450.70000000000005px;top:85.3px;width:50.5px;height:10.5px;background:#ffff00"><span>1.0</span></div>
<div class="ce g" style="left:504.4000000000001px;top:85.3px;width:50.5px;height:10.5px;background:#ffff00"><span>0</span></div>
<div class="ce g" style="left:558.1px;top:85.3px;width:50.5px;height:10.5px;background:#ffff00"><span>0</span></div>
<div class="rh" style="left:-69.5px;top:84px"><span>Drum Beats</span></div>
<div class="ce g" style="left:1.5px;top:99.3px;width:21px;height:10.5px;background:#ffff00"></div>
<div class="ce g" style="left:25px;top:99.3px;width:46.5px;height:10.5px;background:#ffff00"></div>
<div class="ce g" style="left:74.80000000000001px;top:99.3px;width:50.5px;height:10.5px;background:#ffff00"><span>50.0</span></div>
<div class="ce g" style="left:128.5px;top:99.3px;width:50.5px;height:10.5px;background:#ffff00"><span>5.0</span></div>
<div class="ce g" style="left:182.20000000000005px;top:99.3px;width:50.5px;height:10.5px;background:#ffff00"><span>15.0</span></div>
<div class="ce g" style="left:235.90000000000003px;top:99.3px;width:50.5px;height:10.5px;background:#ffff00"><span>50.0</span></div>
<div class="ce g" style="left:289.6px;top:99.3px;width:50.5px;height:10.5px;background:#ffff00"><span>5.0</span></div>
<div class="ce g" style="left:343.3px;top:99.3px;width:50.5px;height:10.5px;background:#ffff00"><span>5.0</span></div>
<div class="ce g" style="left:397.00000000000006px;top:99.3px;width:50.5px;height:10.5px;background:#ffff00"><span>20.0</span></div>
<div class="ce g" style="left:450.70000000000005px;top:99.3px;width:50.5px;height:10.5px;background:#ffff00"><span>50.0</span></div>
<div class="ce g" style="left:504.4000000000001px;top:99.3px;width:50.5px;height:10.5px;background:#ffff00"><span>100</span></div>
<div class="ce g" style="left:558.1px;top:99.3px;width:50.5px;height:10.5px;background:#ffff00"><span>100</span></div>
<div class="rh" style="left:-69.5px;top:98px"><span>Drum Weight</span></div>
<div class="ce" style="left:1px;top:112px;width:23.5px;height:14px;background:#ffff00"><div class="chk" style="left:2px;top:3px"></div><svg class="a" style="left:3px;top:0px" width="12" height="12"><path d="M1.3 6.2L3.9 9.6L8.9 1.2" stroke="#000" stroke-width="1.8" fill="none" stroke-linejoin="miter"/></svg></div>
<div class="ce g" style="left:25px;top:113.3px;width:46.5px;height:10.5px;background:#ffff00"><span style="left:3px">100</span></div>
<div class="ce g" style="left:74.80000000000001px;top:113.3px;width:50.5px;height:10.5px;background:#ffff00"><span><i>X</i>4 <i>X</i>8 <i>X</i>8 <i>X</i>4</span></div>
<div class="ce g" style="left:128.5px;top:113.3px;width:50.5px;height:10.5px;background:#ffff00"><span><i>X</i>4 <i>X</i>8 <i>X</i>8 <i>X</i>4</span></div>
<div class="ce g" style="left:182.20000000000005px;top:113.3px;width:50.5px;height:10.5px;background:#ffff00"><span><i>X</i>4 <i>X</i>8 <i>X</i>8</span></div>
<div class="ce g" style="left:235.90000000000003px;top:113.3px;width:50.5px;height:10.5px;background:#ffff00"><span><i>X</i>4</span></div>
<div class="ce g" style="left:289.6px;top:113.3px;width:50.5px;height:10.5px;background:#ffff00"><span></span></div>
<div class="ce g" style="left:343.3px;top:113.3px;width:50.5px;height:10.5px;background:#ffff00"><span><i>X</i>4 <i>X</i>4 <i>X</i>8 <i>X</i>8</span></div>
<div class="ce g" style="left:397.00000000000006px;top:113.3px;width:50.5px;height:10.5px;background:#ffff00"><span><i>X</i>8 <i>X</i>8 <i>X</i>4 <i>X</i>4</span></div>
<div class="ce g" style="left:450.70000000000005px;top:113.3px;width:50.5px;height:10.5px;background:#ffff00"><span><i>X</i>4</span></div>
<div class="ce g" style="left:504.4000000000001px;top:113.3px;width:50.5px;height:10.5px;background:#ffff00"><span></span></div>
<div class="ce g" style="left:558.1px;top:113.3px;width:50.5px;height:10.5px;background:#ffff00"><span></span></div>
<div class="rh" style="left:-69.5px;top:112px"><span>Ride Cymbal 1</span></div>
<div class="ce" style="left:1px;top:126px;width:23.5px;height:14px;background:#ffff00"><div class="chk" style="left:2px;top:3px"></div><svg class="a" style="left:3px;top:0px" width="12" height="12"><path d="M1.3 6.2L3.9 9.6L8.9 1.2" stroke="#000" stroke-width="1.8" fill="none" stroke-linejoin="miter"/></svg></div>
<div class="ce g" style="left:25px;top:127.3px;width:46.5px;height:10.5px;background:#ffff00"><span style="left:3px">100</span></div>
<div class="ce g" style="left:74.80000000000001px;top:127.3px;width:50.5px;height:10.5px;background:#ffff00"><span><i>R</i>4 <i>X</i>4 <i>R</i>4 <i>X</i>4</span></div>
<div class="ce g" style="left:128.5px;top:127.3px;width:50.5px;height:10.5px;background:#ffff00"><span><i>R</i>4 <i>X</i>4 <i>R</i>4</span></div>
<div class="ce g" style="left:182.20000000000005px;top:127.3px;width:50.5px;height:10.5px;background:#ffff00"><span><i>R</i>4 <i>X</i>4</span></div>
<div class="ce g" style="left:235.90000000000003px;top:127.3px;width:50.5px;height:10.5px;background:#ffff00"><span><i>X</i>4</span></div>
<div class="ce g" style="left:289.6px;top:127.3px;width:50.5px;height:10.5px;background:#ffff00"><span><i>X</i>8</span></div>
<div class="ce g" style="left:343.3px;top:127.3px;width:50.5px;height:10.5px;background:#ffff00"><span><i>R</i>4 <i>X</i>4 <i>R</i>4 <i>X</i>4</span></div>
<div class="ce g" style="left:397.00000000000006px;top:127.3px;width:50.5px;height:10.5px;background:#ffff00"><span><i>R</i>4 <i>X</i>4 <i>R</i>4 <i>X</i>4</span></div>
<div class="ce g" style="left:450.70000000000005px;top:127.3px;width:50.5px;height:10.5px;background:#ffff00"><span></span></div>
<div class="ce g" style="left:504.4000000000001px;top:127.3px;width:50.5px;height:10.5px;background:#ffff00"><span></span></div>
<div class="ce g" style="left:558.1px;top:127.3px;width:50.5px;height:10.5px;background:#ffff00"><span></span></div>
<div class="rh" style="left:-69.5px;top:126px"><span>Closed Hi-Hat</span></div>
<div class="ce" style="left:1px;top:140px;width:23.5px;height:14px;background:#ffff00"><div class="chk" style="left:2px;top:3px"></div><svg class="a" style="left:3px;top:0px" width="12" height="12"><path d="M1.3 6.2L3.9 9.6L8.9 1.2" stroke="#000" stroke-width="1.8" fill="none" stroke-linejoin="miter"/></svg></div>
<div class="ce g" style="left:25px;top:141.3px;width:46.5px;height:10.5px;background:#ffff00"><span style="left:3px">100</span></div>
<div class="ce g" style="left:74.80000000000001px;top:141.3px;width:50.5px;height:10.5px;background:#ffff00"><span></span></div>
<div class="ce g" style="left:128.5px;top:141.3px;width:50.5px;height:10.5px;background:#ffff00"><span></span></div>
<div class="ce g" style="left:182.20000000000005px;top:141.3px;width:50.5px;height:10.5px;background:#ffff00"><span></span></div>
<div class="ce g" style="left:235.90000000000003px;top:141.3px;width:50.5px;height:10.5px;background:#ffff00"><span></span></div>
<div class="ce g" style="left:289.6px;top:141.3px;width:50.5px;height:10.5px;background:#ffff00"><span><i>X</i>8</span></div>
<div class="ce g" style="left:343.3px;top:141.3px;width:50.5px;height:10.5px;background:#ffff00"><span></span></div>
<div class="ce g" style="left:397.00000000000006px;top:141.3px;width:50.5px;height:10.5px;background:#ffff00"><span></span></div>
<div class="ce g" style="left:450.70000000000005px;top:141.3px;width:50.5px;height:10.5px;background:#ffff00"><span></span></div>
<div class="ce g" style="left:504.4000000000001px;top:141.3px;width:50.5px;height:10.5px;background:#ffff00"><span></span></div>
<div class="ce g" style="left:558.1px;top:141.3px;width:50.5px;height:10.5px;background:#ffff00"><span></span></div>
<div class="rh" style="left:-69.5px;top:140px"><span>Acoustic Snare</span></div>
<div class="ce" style="left:1px;top:154px;width:23.5px;height:14px;background:#ffff00"><div class="chk" style="left:2px;top:3px"></div><svg class="a" style="left:3px;top:0px" width="12" height="12"><path d="M1.3 6.2L3.9 9.6L8.9 1.2" stroke="#000" stroke-width="1.8" fill="none" stroke-linejoin="miter"/></svg></div>
<div class="ce g" style="left:25px;top:155.3px;width:46.5px;height:10.5px;background:#ffff00"></div>
<div class="ce g" style="left:74.80000000000001px;top:155.3px;width:50.5px;height:10.5px;background:#ffff00"><span></span></div>
<div class="ce g" style="left:128.5px;top:155.3px;width:50.5px;height:10.5px;background:#ffff00"><span></span></div>
<div class="ce g" style="left:182.20000000000005px;top:155.3px;width:50.5px;height:10.5px;background:#ffff00"><span></span></div>
<div class="ce g" style="left:235.90000000000003px;top:155.3px;width:50.5px;height:10.5px;background:#ffff00"><span></span></div>
<div class="ce g" style="left:289.6px;top:155.3px;width:50.5px;height:10.5px;background:#ffff00"><span></span></div>
<div class="ce g" style="left:343.3px;top:155.3px;width:50.5px;height:10.5px;background:#ffff00"><span></span></div>
<div class="ce g" style="left:397.00000000000006px;top:155.3px;width:50.5px;height:10.5px;background:#ffff00"><span></span></div>
<div class="ce g" style="left:450.70000000000005px;top:155.3px;width:50.5px;height:10.5px;background:#ffff00"><span></span></div>
<div class="ce g" style="left:504.4000000000001px;top:155.3px;width:50.5px;height:10.5px;background:#ffff00"><span></span></div>
<div class="ce g" style="left:558.1px;top:155.3px;width:50.5px;height:10.5px;background:#ffff00"><span></span></div>
<div class="a" style="left:0;top:0;width:1px;height:160px;background:#2a2a2a"></div>
<div class="a" style="left:0;top:0;width:620px;height:1px;background:#2a2a2a"></div>
</div>
<div class="rh" style="top:344.3px;height:14px;"><span>Bass Beats</span></div>
<div class="rh" style="top:358.3px;height:14px;"><span>Bass Weight</span></div>
<div class="rh" style="top:372.3px;height:14px;"><span>Bass</span></div>
<div class="rh" style="top:386.3px;height:14px;"><span>Chord Beats</span></div>
<div class="rh" style="top:400.3px;height:14px;"><span>Chord Weight</span></div>
<div class="rh" style="top:414.3px;height:14px;"><span>Chord</span></div>
<div class="rh" style="top:428.3px;height:14px;"><span>Drum Beats</span></div>
<div class="rh" style="top:442.3px;height:14px;"><span>Drum Weight</span></div>
<div class="rh" style="top:456.3px;height:14px;"><span>Ride Cymbal 1</span></div>
<div class="rh" style="top:470.3px;height:14px;"><span>Closed Hi-Hat</span></div>
<div class="rh" style="top:484.3px;height:14px;"><span>Acoustic Snare</span></div>
<div class="rh" style="top:498.3px;height:2.1999999999999886px;border-bottom:none;"><span></span></div>
<div class="a" style="left:688px;top:344px;width:11.5px;height:156.5px;background:linear-gradient(to right,#e4e4e4,#fbfbfb 50%,#f0f0f0)"></div>
<div class="a" style="left:688.8px;top:348.5px;width:9px;height:69.5px;border-radius:5px;border:1px solid #1c4ca8;background:linear-gradient(to right,#3f7ad8 0,#80bdf8 35%,#a6dcff 60%,#6cb2f4 100%)"></div>
<div class="a" style="left:688.5px;top:466px;width:10px;height:11px;border-radius:0 0 5px 5px;background:linear-gradient(to bottom,#f4f4f4,#dedede);border-bottom:1px solid #c4c4c4"></div>
<div class="a" style="left:688px;top:478px;width:11.5px;height:22px;background:#f6f6f6;border-top:1px solid #c8c8c8"></div>
<div class="a" style="left:688px;top:489px;width:11.5px;height:1px;background:#c8c8c8"></div>
<svg class="a" style="left:688px;top:478px" width="12" height="22"><path d="M3.5 8.3L5.8 4.8L8.1 8.3Z M3.5 14.2L5.8 17.7L8.1 14.2Z" fill="#222"/></svg>
<div class="a" style="left:81px;top:500.5px;width:607px;height:12px;background:linear-gradient(to bottom,#e4e4e4,#fbfbfb 50%,#f0f0f0)"></div>
<div class="a" style="left:85.5px;top:501.5px;width:66px;height:9.5px;border-radius:5px;border:1px solid #1c4ca8;background:linear-gradient(to bottom,#3f7ad8 0,#80bdf8 35%,#a6dcff 60%,#6cb2f4 100%)"></div>
<div class="a" style="left:655px;top:501px;width:11px;height:11px;border-radius:0 5px 5px 0;background:linear-gradient(to right,#f4f4f4,#dedede);border-right:1px solid #c4c4c4"></div>
<div class="a" style="left:666px;top:500.5px;width:22px;height:12px;background:#f6f6f6;border-left:1px solid #c8c8c8"></div>
<div class="a" style="left:677px;top:500.5px;width:1px;height:12px;background:#c8c8c8"></div>
<svg class="a" style="left:666px;top:500px" width="22" height="12"><path d="M8.3 4L4.8 6.3L8.3 8.6Z M14.2 4L17.7 6.3L14.2 8.6Z" fill="#222"/></svg>
<div class="pb" style="left:298px;top:524.5px;width:47.5px;height:14.5px"><span style="left:10.5px">Cancel</span></div>
<div class="pb" style="left:353px;top:524.5px;width:58.5px;height:14.5px"><span style="left:8px">Save Style</span></div>
<div class="a" style="left:693.5px;top:534px;width:10.5px;height:10px;background:#f8f8f8;border-left:1px solid #d0d0d0;border-top:1px solid #d0d0d0"></div>
<svg class="a" style="left:693px;top:533px" width="11" height="11"><path d="M10.5 3.5L3.5 10.5M10.5 6.5L6.5 10.5M10.5 9L9 10.5" stroke="#8a8a8a" stroke-width="0.9"/><path d="M10.5 4.5L4.5 10.5M10.5 7.5L7.5 10.5" stroke="#fff" stroke-width="0.8"/></svg>
</body></html>
